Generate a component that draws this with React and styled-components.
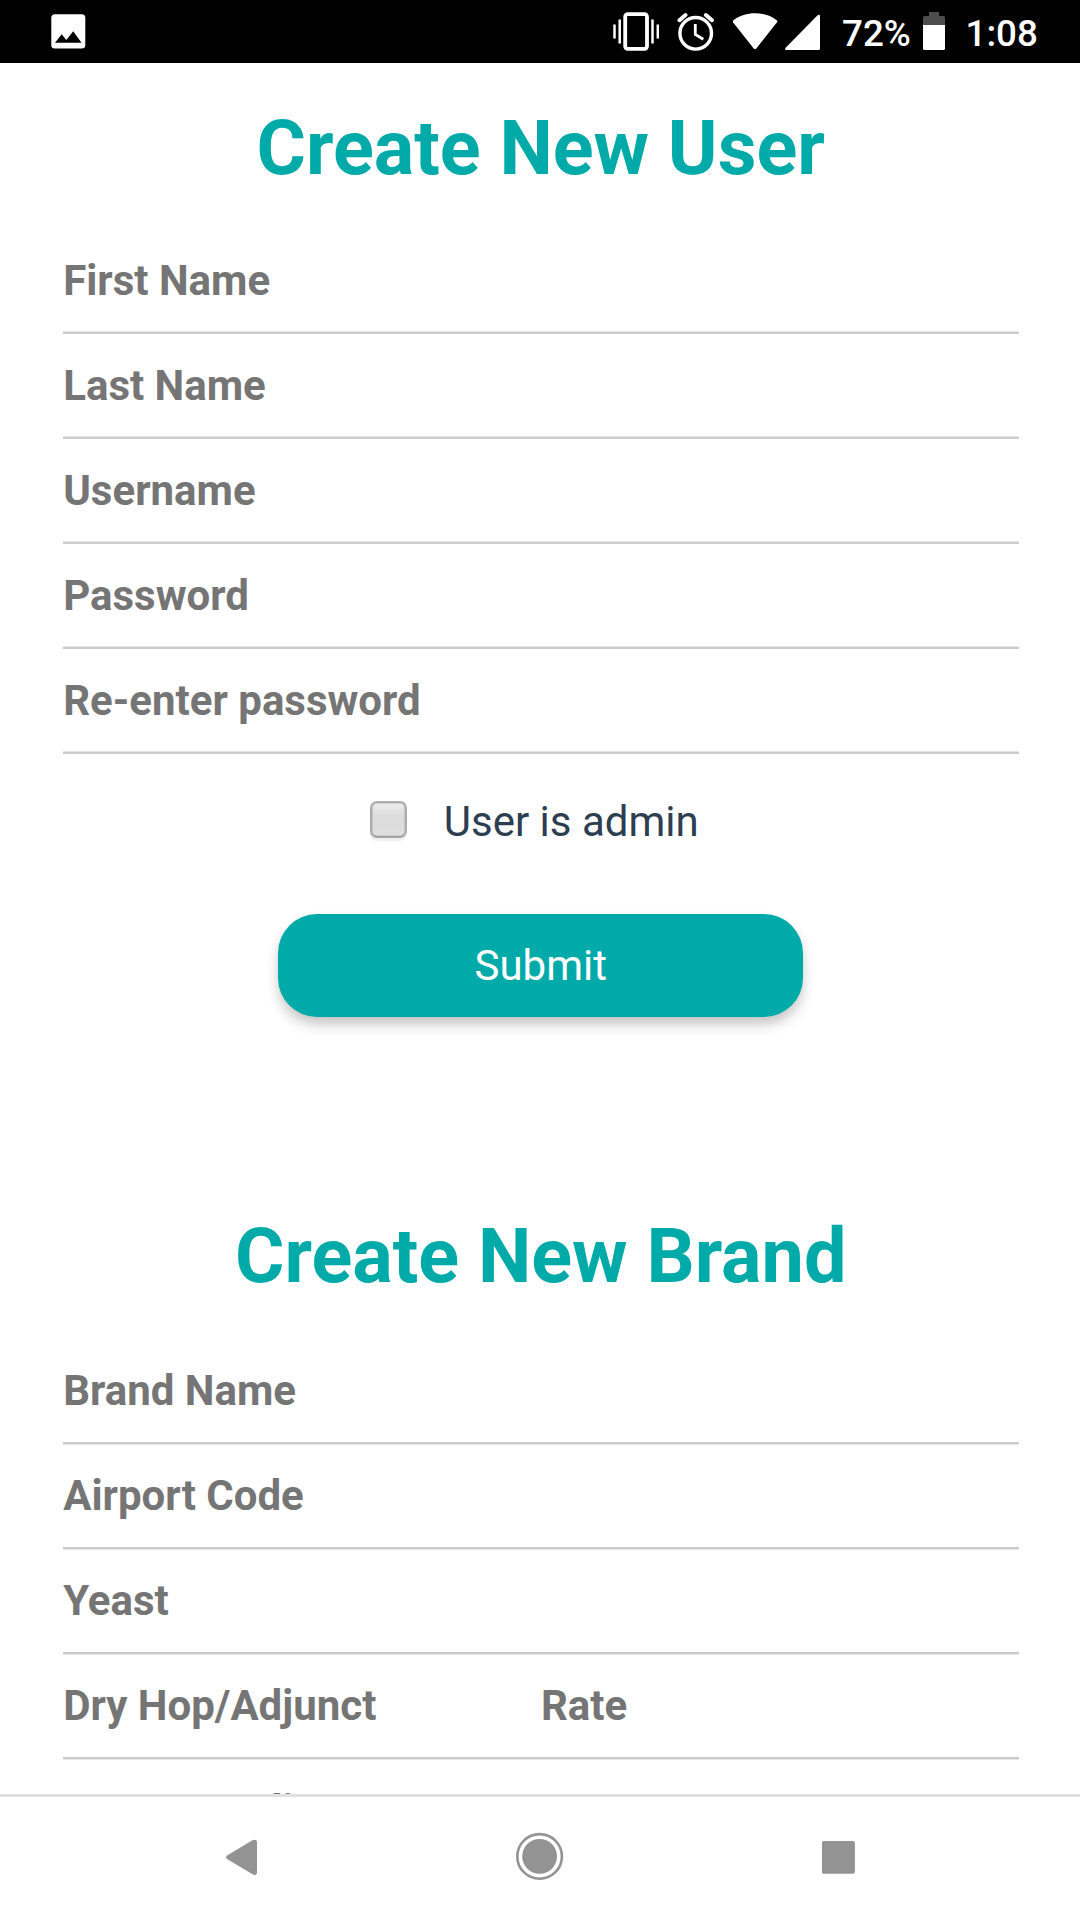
import React from 'react';
import styled, { createGlobalStyle } from 'styled-components';

const teal = '#00aaa8';

const GlobalStyle = createGlobalStyle`
  * { box-sizing: border-box; }
  body {
    margin: 0;
    background: #fff;
    font-family: Roboto, 'Noto Sans', sans-serif;
  }
`;

const Screen = styled.div`
  display: flex;
  flex-direction: column;
  width: 1080px;
  height: 1920px;
  overflow: hidden;
  background: #fff;
`;

const StatusBar = styled.header`
  display: flex;
  justify-content: space-between;
  flex: none;
  height: 63px;
  padding: 0 42px 0 51px;
  background: #000;
  color: #fff;
`;

const StatusGroup = styled.div`
  display: flex;
  align-items: flex-start;
`;

const StatusIcon = styled.svg`
  display: block;
  flex: none;
  height: 63px;
  width: ${(p) => p.$w}px;
  margin-right: ${(p) => p.$gap || 0}px;
`;

const StatusText = styled.span`
  width: ${(p) => p.$w}px;
  margin-right: ${(p) => p.$gap || 0}px;
  font-size: 36.75px;
  font-weight: 500;
  line-height: 67px;
  white-space: nowrap;
`;

const Content = styled.main`
  flex: 1;
  min-height: 0;
  overflow: hidden;
  padding: 41px 61.5px 0 63px;
`;

const Section = styled.section`
  display: flex;
  flex-direction: column;
  align-items: center;
  margin-bottom: ${(p) => p.$after || 0}px;
`;

const Title = styled.h1`
  margin: 0 0 ${(p) => p.$gap}px;
  color: ${teal};
  font-size: 75.6px;
  font-weight: 700;
  line-height: 89px;
`;

const Fields = styled.div`
  width: 100%;
`;

const FieldRow = styled.div`
  display: flex;
`;

const Field = styled.input`
  flex: 1;
  min-width: 0;
  width: 100%;
  display: block;
  height: 105px;
  padding: 0 0 1px 0.2px;
  border: 0;
  border-bottom: 2px solid #cbcbcb;
  border-radius: 0;
  outline: 0;
  background: transparent;
  box-shadow: ${(p) => (p.$edge === 'above' ? 'inset 0 -1px #e6e6e6' : '0 1px #e6e6e6')};
  font: 700 42px Roboto, 'Noto Sans', sans-serif;
  color: #757575;
  &::placeholder { color: #757575; opacity: 1; }
`;

const AdminOption = styled.label`
  display: flex;
  align-items: center;
  gap: 37px;
  height: 49px;
  margin: 43px 0 68px;
  padding-right: 13px;
  color: #2c3e50;
  font-size: 42px;
  line-height: 49px;
`;

const Checkbox = styled.input`
  appearance: none;
  flex: none;
  width: 37px;
  height: 37px;
  margin: 0 0 4px;
  border: 2px solid #adadad;
  border-bottom-color: #a4a4a4;
  border-radius: 7px;
  background: linear-gradient(#ededed, #dcdcdc 38%, #dedede);
  box-shadow: inset 0 0 0 0.6px #b4b4b4, 0 3px 0 #f0f0f0;
`;

const SubmitButton = styled.button`
  width: 525px;
  height: 103px;
  padding: 0 0 1px;
  border: 0;
  border-radius: 39px;
  background: ${teal};
  color: #fff;
  font: 400 42px Roboto, 'Noto Sans', sans-serif;
  box-shadow: 0 8px 13px -1px rgba(0, 0, 0, 0.24);
`;

const NavBar = styled.nav`
  display: flex;
  justify-content: space-between;
  flex: none;
  height: 126px;
  padding: 0 224px 0 226px;
  border-top: 3px solid #e0e0e0;
  background: #fff;
`;

const NavIcon = styled.svg`
  display: block;
  flex: none;
  height: 123px;
  width: ${(p) => p.$w}px;
  fill: #939393;
`;

const userFields = ['First Name', 'Last Name', 'Username', 'Password', 'Re-enter password'];
const brandFields = ['Brand Name', 'Airport Code', 'Yeast'];

function StatusIcons() {
  return (
    <StatusGroup>
      <StatusIcon $w={46} $gap={18} viewBox="613 0 46 63" fill="none" stroke="#fff">
        <rect x="625.2" y="14.2" width="21.8" height="34.6" rx="2.5" strokeWidth="3.8" />
        <path d="M614.5 24.5v14M619.7 19.5v24M652.5 19.5v24M657.8 24.5v14" strokeWidth="2.5" />
      </StatusIcon>
      <StatusIcon $w={38} $gap={18} viewBox="677 0 38 63" fill="none" stroke="#fff">
        <circle cx="695.7" cy="33.3" r="15.8" strokeWidth="3.4" />
        <path d="M679.5 20.2l6-5.2M711.9 20.2l-6-5.2" strokeWidth="4" strokeLinecap="round" />
        <path d="M695.3 24v10.5l8 4.8" strokeWidth="2.8" />
      </StatusIcon>
      <StatusIcon $w={45} $gap={7} viewBox="733 0 45 63" fill="#fff">
        <path d="M733.2 20.2C745.5 10.8 764.5 10.8 776.8 20.2Q777.8 21 777 22.2L756.5 48.2Q755 50 753.5 48.2L733 22.2Q732.2 21 733.2 20.2Z" />
      </StatusIcon>
      <StatusIcon $w={35} $gap={22} viewBox="785 0 35 63" fill="#fff">
        <path d="M785.4 48L817.6 15.3Q820 13.8 820 16V48.5Q820 50 818.5 50H786.3Q784.5 50 785.4 48Z" />
      </StatusIcon>
      <StatusText $w={68} $gap={13}>72%</StatusText>
      <StatusIcon $w={22} $gap={20.5} viewBox="923 0 22 63">
        <path d="M929 12h10v4h4.5q1.5 0 1.5 1.5V25H923v-7.5q0-1.5 1.5-1.5h4.5z" fill="#4d4d4d" />
        <path d="M923 25h22v23.5q0 1.5-1.5 1.5h-19q-1.5 0-1.5-1.5z" fill="#fff" />
      </StatusIcon>
      <StatusText $w={72.5}>1:08</StatusText>
    </StatusGroup>
  );
}

export default function App() {
  return (
    <>
      <GlobalStyle />
      <Screen>
        <StatusBar>
          <StatusIcon $w={35} viewBox="51 0 35 63">
            <rect x="51.3" y="14.3" width="34" height="34.2" rx="3.5" fill="#fff" />
            <path d="M55 42.7L61.7 34.3L66.3 40L73.2 31.3L81.5 42.7Z" fill="#000" />
          </StatusIcon>
          <StatusIcons />
        </StatusBar>
        <Content>
          <Section $after={195}>
            <Title $gap={36}>Create New User</Title>
            <Fields>
              {userFields.map((name) => (
                <Field key={name} placeholder={name} $edge="above" />
              ))}
            </Fields>
            <AdminOption>
              <Checkbox type="checkbox" />
              User is admin
            </AdminOption>
            <SubmitButton type="button">Submit</SubmitButton>
          </Section>
          <Section>
            <Title $gap={38}>Create New Brand</Title>
            <Fields>
              {brandFields.map((name) => (
                <Field key={name} placeholder={name} $edge="below" />
              ))}
              {[0, 1].map((row) => (
                <FieldRow key={row}>
                  <Field placeholder="Dry Hop/Adjunct" $edge="below" />
                  <Field placeholder={row === 0 ? 'Rate' : ''} $edge="below" />
                </FieldRow>
              ))}
            </Fields>
          </Section>
        </Content>
        <NavBar>
          <NavIcon $w={31} viewBox="226 1797 31 123">
            <path d="M227 1855.5L252.5 1840.3Q257 1838.5 257 1842.5V1872.5Q257 1876 253 1874.4L227 1859Q225 1857.3 227 1855.5Z" />
          </NavIcon>
          <NavIcon $w={48} viewBox="515.5 1797 48 123">
            <circle cx="539.1" cy="1856.4" r="17.4" />
            <circle cx="539.1" cy="1856.4" r="22.3" fill="none" stroke="#939393" strokeWidth="2.6" />
          </NavIcon>
          <NavIcon $w={34} viewBox="822 1797 34 123">
            <rect x="821.9" y="1841" width="33" height="32.7" rx="2" />
          </NavIcon>
        </NavBar>
      </Screen>
    </>
  );
}
